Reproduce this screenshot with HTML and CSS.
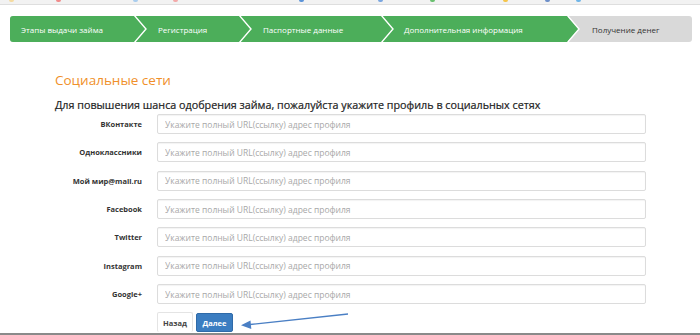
FILE: index.html
```html
<!DOCTYPE html>
<html lang="ru">
<head>
<meta charset="utf-8">
<title>Социальные сети</title>
<link rel="stylesheet" href="styles.css">
</head>
<body>
<div class="topbar">
  <span class="dot d1"></span><span class="dot d2"></span><span class="dot d3"></span><span class="dot d4"></span>
  <span class="dot d5"></span><span class="dot d6"></span><span class="dot d7"></span><span class="dot d8"></span>
  <span class="dot d9"></span><span class="dot d10"></span>
</div>
<nav class="steps">
  <div class="step done s1">Этапы выдачи займа<svg class="tip" viewBox="0 0 13 26" width="13" height="26"><polygon points="0,0 12,13 0,26" fill="#4cae5a"/><polyline points="0,-1 12,13 0,27" fill="none" stroke="#fff" stroke-width="1.4"/></svg></div>
  <div class="step done s2">Регистрация<svg class="tip" viewBox="0 0 13 26" width="13" height="26"><polygon points="0,0 12,13 0,26" fill="#4cae5a"/><polyline points="0,-1 12,13 0,27" fill="none" stroke="#fff" stroke-width="1.4"/></svg></div>
  <div class="step done s3">Паспортные данные<svg class="tip" viewBox="0 0 13 26" width="13" height="26"><polygon points="0,0 12,13 0,26" fill="#4cae5a"/><polyline points="0,-1 12,13 0,27" fill="none" stroke="#fff" stroke-width="1.4"/></svg></div>
  <div class="step done s4">Дополнительная информация<svg class="tip" viewBox="0 0 13 26" width="13" height="26"><polygon points="0,0 12,13 0,26" fill="#4cae5a"/><polyline points="0,-1 12,13 0,27" fill="none" stroke="#fff" stroke-width="1.4"/></svg></div>
  <div class="step s5">Получение денег</div>
</nav>
<main class="content">
  <h1 class="title">Социальные сети</h1>
  <p class="lead">Для повышения шанса одобрения займа, пожалуйста укажите профиль в социальных сетях</p>
  <form class="form">
    <label class="lbl">ВКонтакте</label><input class="field" placeholder="Укажите полный URL(ссылку) адрес профиля">
    <label class="lbl">Одноклассники</label><input class="field" placeholder="Укажите полный URL(ссылку) адрес профиля">
    <label class="lbl">Мой мир@mail.ru</label><input class="field" placeholder="Укажите полный URL(ссылку) адрес профиля">
    <label class="lbl">Facebook</label><input class="field" placeholder="Укажите полный URL(ссылку) адрес профиля">
    <label class="lbl">Twitter</label><input class="field" placeholder="Укажите полный URL(ссылку) адрес профиля">
    <label class="lbl">Instagram</label><input class="field" placeholder="Укажите полный URL(ссылку) адрес профиля">
    <label class="lbl">Google+</label><input class="field" placeholder="Укажите полный URL(ссылку) адрес профиля">
  </form>
  <div class="actions">
    <button class="btn back" type="button">Назад</button>
    <button class="btn next" type="button">Далее</button>
    <svg class="arrow" viewBox="0 0 110 20" width="110" height="20">
      <line x1="108" y1="1" x2="10" y2="11.5" stroke="#4a7fc4" stroke-width="1.3"/>
      <polygon points="1,12.3 10.5,7.5 11.3,16" fill="#4a7fc4"/>
    </svg>
  </div>
</main>
<div class="bottomline"></div>
</body>
</html>
```
FILE: styles.css
```css
* { box-sizing: border-box; }
html, body { margin: 0; padding: 0; background: #fff; }
body {
  font-family: "Open Sans", "Noto Sans", sans-serif;
  color: #333;
  width: 700px;
  height: 335px;
  overflow: hidden;
  position: relative;
}
.topbar {
  height: 5px;
  background: #f2f2f2;
  border-bottom: 1px solid #dedede;
  position: relative;
}
.dot {
  position: absolute;
  top: 0;
  width: 5px;
  height: 2px;
  border-radius: 0 0 3px 3px;
}
.d1 { left: 9px; background: #f5dba0; }
.d2 { left: 56px; background: #f08a8a; }
.d3 { left: 133px; background: #a9cdee; }
.d4 { left: 173px; background: #f3a9a9; }
.d5 { left: 299px; background: #5c93d8; }
.d6 { left: 378px; background: #7aa6e0; }
.d7 { left: 430px; background: #69c06f; }
.d8 { left: 503px; background: #f5c54a; }
.d9 { left: 545px; background: #6d8fc9; }
.d10 { left: 576px; background: #6fb5e8; }

.steps {
  display: flex;
  margin: 11px 0 0 10px;
  width: 682px;
  height: 26px;
  border-radius: 3px;
  background: #d9d9d9;
  font-size: 8px;
  overflow: hidden;
}
.step {
  position: relative;
  display: flex;
  align-items: center;
  padding-left: 23px;
  white-space: nowrap;
  color: #fff;
}
.step.done { background: #4cae5a; }
.s1 { width: 125px; padding-left: 11px; }
.s2 { width: 105px; }
.s3 { width: 142px; }
.s4 { width: 186px; padding-left: 22px; }
.s5 { flex: 1; color: #333; padding-left: 24px; }
.tip {
  position: absolute;
  top: 0;
  right: -12px;
  z-index: 1;
  overflow: visible;
}

.content { padding-left: 55px; }
.title {
  margin: 29px 0 0;
  font-size: 13.5px;
  line-height: 18px;
  font-weight: 400;
  color: #f0902a;
}
.lead {
  margin: 9px 0 0;
  font-size: 10.75px;
  line-height: 14px;
  font-weight: 400;
  color: #222;
  -webkit-text-stroke: 0.2px #222;
}
.form {
  margin-top: 2px;
  display: grid;
  grid-template-columns: 87px 489px;
  grid-auto-rows: 20px;
  column-gap: 15px;
  row-gap: 8.35px;
  align-items: center;
}
.lbl {
  text-align: right;
  font-size: 7.5px;
  font-weight: 700;
  color: #333;
  white-space: nowrap;
}
.field {
  height: 20px;
  width: 100%;
  border: 1px solid #dcdcdc;
  border-radius: 2px;
  box-shadow: inset 0 1px 1px rgba(0,0,0,0.05);
  padding: 0 7px;
  font-family: "Open Sans", "Noto Sans", sans-serif;
  font-size: 8.5px;
  color: #555;
  background: #fff;
}
.field::placeholder { color: #a8a8a8; }

.actions {
  position: relative;
  display: flex;
  align-items: flex-end;
  gap: 3px;
  margin: 8px 0 0 102px;
  height: 20px;
}
.btn {
  font-family: "Open Sans", "Noto Sans", sans-serif;
  font-size: 7.5px;
  font-weight: 700;
  border-radius: 2px;
  padding: 0;
  cursor: pointer;
}
.back {
  width: 36px;
  height: 20px;
  background: #fff;
  color: #444;
  border: 1px solid #e4e4e4;
  border-bottom: none;
}
.next {
  width: 37px;
  height: 19px;
  background: #3b7dc1;
  color: #fff;
  border: 1px solid #2f6aa8;
}
.arrow {
  position: absolute;
  left: 83px;
  top: 1px;
}
.bottomline {
  position: absolute;
  left: 0;
  bottom: 0;
  width: 700px;
  height: 2px;
  background: #8a8a8a;
}
```
